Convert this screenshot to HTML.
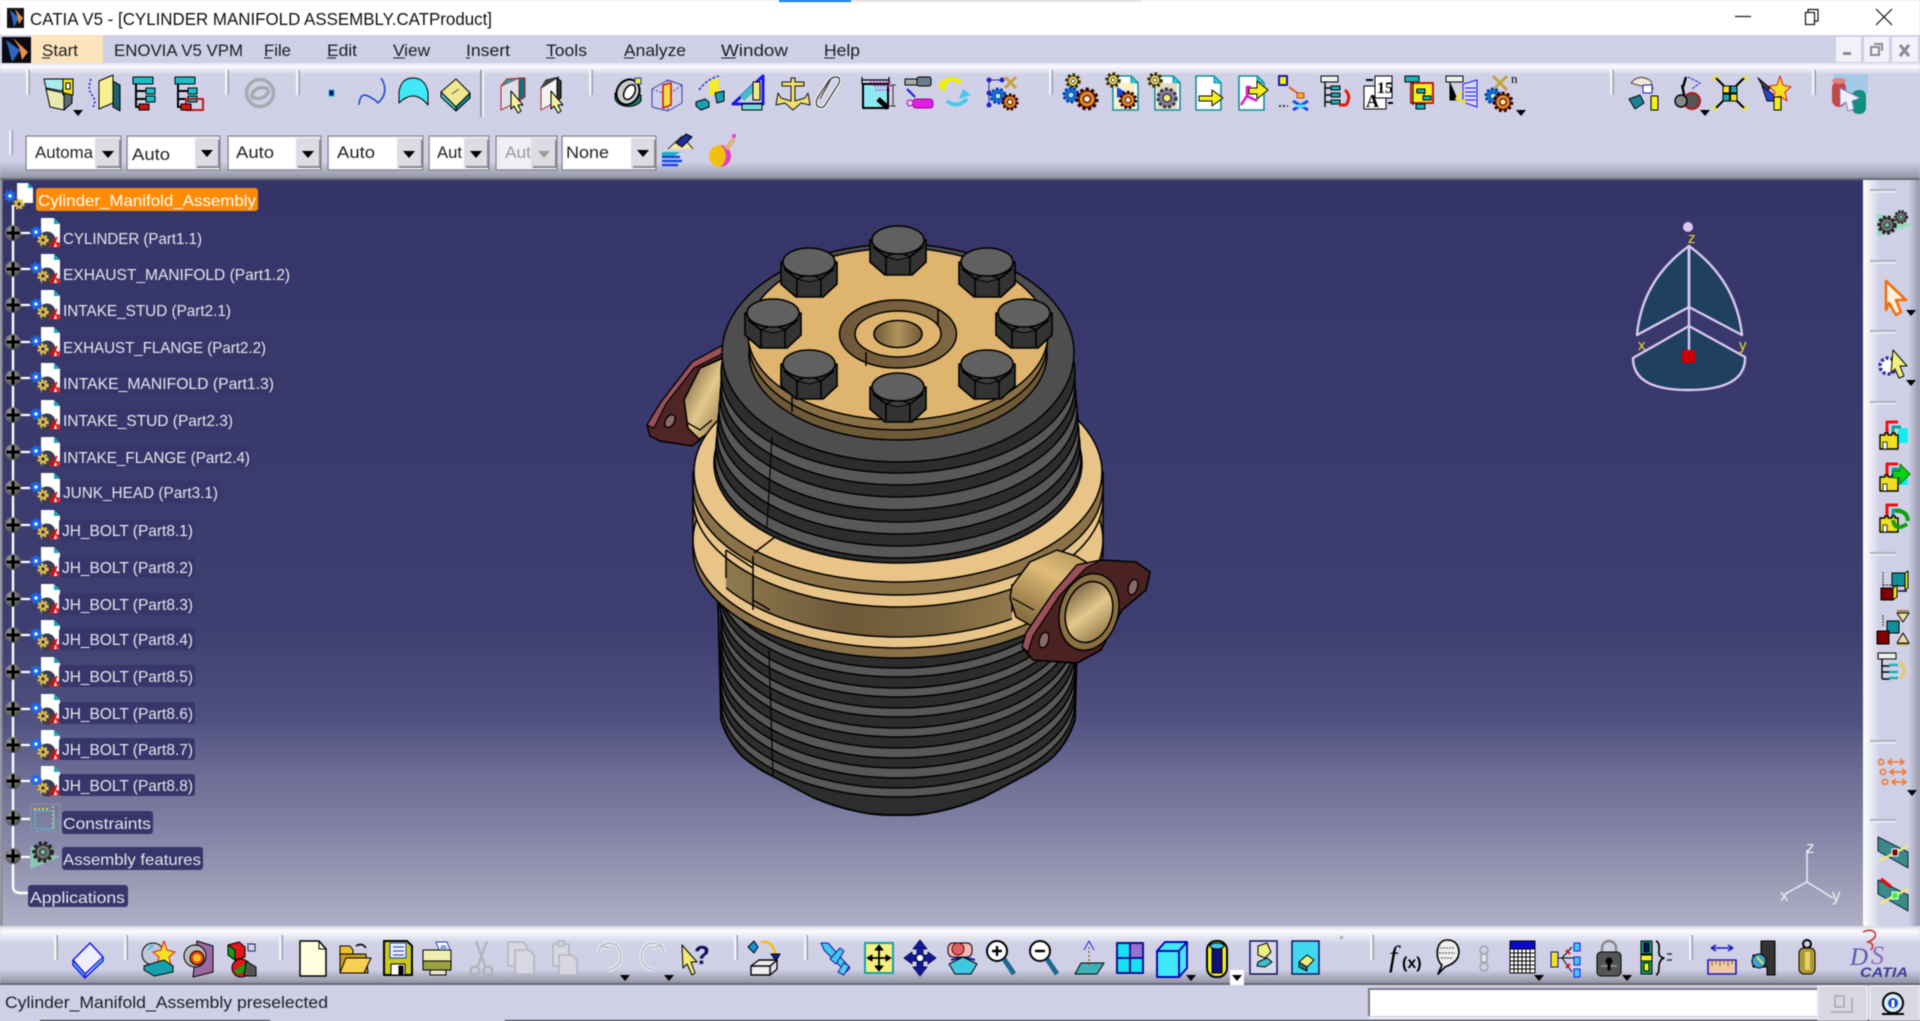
<!DOCTYPE html>
<html><head><meta charset="utf-8"><title>CATIA V5</title>
<style>html,body{margin:0;padding:0;background:#cfd0e6;width:1920px;height:1021px;overflow:hidden}svg{display:block;filter:blur(.4px)}
text{font-family:"Liberation Sans",sans-serif}</style></head><body>
<svg xmlns="http://www.w3.org/2000/svg" width="1920" height="1021" viewBox="0 0 1920 1021">
<defs>
<linearGradient id="vp" x1="0" y1="0" x2="0" y2="1"><stop offset="0" stop-color="#36356a"/><stop offset=".6" stop-color="#3e3e70"/><stop offset=".72" stop-color="#505080"/><stop offset=".8" stop-color="#6e6e96"/><stop offset=".87" stop-color="#8282a6"/><stop offset="1" stop-color="#b0b0c6"/></linearGradient>
<linearGradient id="tbt" x1="0" y1="0" x2="0" y2="1"><stop offset="0" stop-color="#e4e4f0"/><stop offset=".03" stop-color="#fbfbfe"/><stop offset=".1" stop-color="#d0d1e6"/><stop offset=".86" stop-color="#cfd0e6"/><stop offset="1" stop-color="#9494a6"/></linearGradient>
<linearGradient id="tbb" x1="0" y1="0" x2="0" y2="1"><stop offset="0" stop-color="#d8d8e4"/><stop offset=".09" stop-color="#fbfbfe"/><stop offset=".3" stop-color="#d0d1e6"/><stop offset=".75" stop-color="#cfd0e6"/><stop offset="1" stop-color="#8e8e9e"/></linearGradient>
<linearGradient id="tbr" x1="0" y1="0" x2="1" y2="0"><stop offset="0" stop-color="#fff"/><stop offset=".08" stop-color="#f4f4fa"/><stop offset=".3" stop-color="#cfd0e6"/><stop offset=".8" stop-color="#cfd0e6"/><stop offset="1" stop-color="#9494a8"/></linearGradient>
<linearGradient id="grv" gradientUnits="userSpaceOnUse" x1="726" y1="0" x2="1012" y2="0"><stop offset="0" stop-color="#8f7a4f"/><stop offset=".4" stop-color="#70593a"/><stop offset=".75" stop-color="#7a6540"/><stop offset="1" stop-color="#93794c"/></linearGradient>
<linearGradient id="gold" x1=".7" y1="0" x2=".2" y2="1"><stop offset="0" stop-color="#b89a5e"/><stop offset=".3" stop-color="#e0bc78"/><stop offset=".8" stop-color="#8a7040"/></linearGradient>
<linearGradient id="gold2" x1="0" y1="0" x2="1" y2="1"><stop offset="0" stop-color="#5d4a2a"/><stop offset=".5" stop-color="#e4c88c"/><stop offset="1" stop-color="#7c6538"/></linearGradient>
<linearGradient id="hole" x1="0" y1="0" x2="1" y2="0"><stop offset="0" stop-color="#6e5a36"/><stop offset=".5" stop-color="#b1935c"/><stop offset="1" stop-color="#6e5a36"/></linearGradient>
<radialGradient id="pl" cx=".4" cy=".35" r=".7"><stop offset="0" stop-color="#a0a0a0"/><stop offset="1" stop-color="#4a4a4a"/></radialGradient>
<clipPath id="gc"><rect x="726" y="400" width="286" height="300"/></clipPath>
<clipPath id="lowc"><path d="M600 400H1200V600H1078L1075 720Q1068 742 1053 757Q1040 768 1022 777L984 797Q961 807 936 812Q916 816 898 815Q880 816 860 812Q835 807 812 797L774 777Q756 768 743 757Q728 742 721 720L718 600H600z"/></clipPath>

<g id="bolt" stroke="#000" stroke-width="1.6" stroke-linejoin="round">
<path d="M-28 0V22L-13 35H14L28 22V0z" fill="#333"/>
<path d="M-25 7L-12 17L0 12L12 17L25 7M-12 17V34M12 17V34" fill="none"/>
<path d="M-12 17L0 12L12 17L0 20z" fill="#3e3e3e" stroke-width="1"/>
<ellipse rx="26" ry="14" fill="#606060"/>
</g>

<g id="plus"><circle r="8" fill="url(#pl)"/><path d="M-6.5 0H6.5M0-6.5V6.5" stroke="#000" stroke-width="3" fill="none"/></g>
<g id="pt"><path d="M-9-15H4l6 6V14H-9z" fill="#fff"/><path d="M4-15l6 6H4z" fill="#19a8b8"/><circle cx="-3" cy="7" r="8.5" fill="#3a3a50"/>
<circle cx="-14" cy="-1" r="4" fill="#1b6cf0" stroke="#1b6cf0" stroke-width="3.4" stroke-dasharray="2 1.4"/><circle cx="-14" cy="-1" r="1.6" fill="#fff"/>
<circle cx="-7" cy="7" r="4" fill="#d8b84a" stroke="#e2c04a" stroke-width="3.4" stroke-dasharray="2 1.4"/><circle cx="-7" cy="7" r="1.6" fill="#2a2a40"/>
<path d="M3 13L7 4M2 6L10 13" stroke="#e01010" stroke-width="1.6" fill="none"/><circle cx="2" cy="12" r="2" fill="none" stroke="#e01010" stroke-width="1.4"/><circle cx="9" cy="12" r="2" fill="none" stroke="#e01010" stroke-width="1.4"/></g>

<path id="dd" d="M-5 0H5L0 6z" fill="#000"/>
<g id="sv"><rect x="-1" y="0" width="3" height="25" fill="#f4f4f8"/><rect x="1.5" y="0" width="1.4" height="25" fill="#9a9aa8"/></g>
<g id="sh"><rect x="0" y="-1" width="26" height="2.4" fill="#b0b0bc"/><rect x="0" y="1" width="26" height="1.4" fill="#f4f4f8"/></g>

<g id="gy"><circle r="6" fill="#f0e080" stroke="#3a3000" stroke-width="3.6" stroke-dasharray="2.6 2"/><circle r="5" fill="#f0d860" stroke="#000" stroke-width=".8"/><circle r="2" fill="#fff" stroke="#000" stroke-width=".7"/></g>
<g id="go"><circle r="9.5" fill="#c03010" stroke="#200" stroke-width="4" stroke-dasharray="3 2.4"/><circle r="8" fill="#d09030" stroke="#500" stroke-width="1"/><circle r="3.6" fill="#f8f0c0" stroke="#700" stroke-width="1.4"/></g>
<g id="gb"><circle r="7" fill="#1878e0" stroke="#0838a0" stroke-width="3" stroke-dasharray="2.4 2"/><circle r="3" fill="#a0e8ff" stroke="#003" stroke-width=".8"/></g>
<g id="gs"><circle r="9" fill="#666" stroke="#222" stroke-width="3.6" stroke-dasharray="3 2.4"/><circle r="7" fill="#777" stroke="#222" stroke-width="1"/><circle r="3" fill="#6dc0b0" stroke="#222" stroke-width="1"/></g>

<g id="pg"><path d="M-12-17H6l7 7V17H-12z" fill="#fff" stroke="#108e9e" stroke-width="1.6"/><path d="M6-17l7 7H6z" fill="#2ad0e0" stroke="#108e9e"/></g>
<g id="tree"><rect x="-13" y="-16" width="20" height="7" fill="#18c0c8" stroke="#000"/><path d="M-10-9V14H2M-10-2H0M-10 6H0" fill="none" stroke="#000" stroke-width="2"/><rect x="0" y="-5" width="9" height="6" fill="#18c0c8" stroke="#000"/><rect x="0" y="3" width="9" height="6" fill="#18c0c8" stroke="#000"/></g>
<g id="base3"><path d="M-13 0h5v-2h3v2h4v-2h3v2h3V14H-13z" fill="#f0e020" stroke="#000" stroke-width="1.4"/><rect x="-10" y="7" width="4" height="7" fill="#fff" stroke="#000" stroke-width=".8"/></g>
<g id="tp"><path d="M-6 2V-13H5" fill="none" stroke="#f01010" stroke-width="3"/><path d="M0 3V-8H8" fill="none" stroke="#10a0a0" stroke-width="3"/></g>
</defs>

<!-- base regions -->
<rect width="1920" height="35" fill="#fff"/>
<rect x="779" y="0" width="72" height="2" fill="#0078d7"/><rect x="851" y="0" width="290" height="2" fill="#e6e6e6"/>
<rect y="35" width="1920" height="28" fill="#cfd0e6"/>
<rect y="63" width="1920" height="115" fill="url(#tbt)"/>
<rect y="178" width="1920" height="2" fill="#6a6a72"/>
<rect x="0" y="180" width="1864" height="746" fill="url(#vp)"/>
<rect x="0" y="180" width="2.5" height="746" fill="#8c8c96"/>
<rect x="1863" y="180" width="57" height="748" fill="url(#tbr)"/>
<rect y="926" width="1920" height="58" fill="url(#tbb)"/>
<rect y="983" width="1920" height="2" fill="#6a6a72"/>
<rect y="985" width="1920" height="36" fill="#cfd0e6"/>
<rect x="40" y="1020" width="230" height="1" fill="#222"/><rect x="505" y="1020" width="1415" height="1" fill="#222"/>

<!-- title bar -->
<g><rect x="7" y="8" width="17" height="20" fill="#101018"/><path d="M10 10L19 18L14 27L12 18z" fill="#2c68c0"/><path d="M15 9L23 18L19 24L17 15z" fill="#e89040"/></g>
<text x="30" y="25" font-size="17.5" fill="#111" textLength="462" lengthAdjust="spacingAndGlyphs">CATIA V5 - [CYLINDER MANIFOLD ASSEMBLY.CATProduct]</text>
<path d="M1735 16.5H1751" stroke="#111" stroke-width="1.2"/>
<g fill="none" stroke="#111" stroke-width="1.2"><rect x="1805.5" y="12.5" width="9" height="12"/><path d="M1808 12.5V9.5H1818V21H1815"/></g>
<path d="M1876 9L1892 25M1892 9L1876 25" stroke="#111" stroke-width="1.2"/>

<!-- menu bar -->
<rect x="2" y="37" width="29" height="26" fill="#0a0a12"/><path d="M6 40L20 50L12 62L9 50z" fill="#2c68c0"/><path d="M13 38L28 52L22 60L19 47z" fill="#e89040"/>
<rect x="31" y="35" width="72" height="28" fill="#fde4bd"/>
<g font-size="16.5" fill="#1c1c22">
<text x="42" y="56" textLength="36" lengthAdjust="spacingAndGlyphs">Start</text>
<text x="114" y="56" textLength="129" lengthAdjust="spacingAndGlyphs">ENOVIA V5 VPM</text>
<text x="264" y="56" textLength="27" lengthAdjust="spacingAndGlyphs">File</text>
<text x="327" y="56" textLength="30" lengthAdjust="spacingAndGlyphs">Edit</text>
<text x="393" y="56" textLength="37" lengthAdjust="spacingAndGlyphs">View</text>
<text x="466" y="56" textLength="44" lengthAdjust="spacingAndGlyphs">Insert</text>
<text x="546" y="56" textLength="41" lengthAdjust="spacingAndGlyphs">Tools</text>
<text x="624" y="56" textLength="62" lengthAdjust="spacingAndGlyphs">Analyze</text>
<text x="721" y="56" textLength="67" lengthAdjust="spacingAndGlyphs">Window</text>
<text x="824" y="56" textLength="36" lengthAdjust="spacingAndGlyphs">Help</text>
</g>
<g stroke="#1c1c22" stroke-width="1"><path d="M42 58H50M264 58H272M327 58H336M393 58H405M466 58H470M546 58H555M624 58H634M721 58H736M824 58H835"/></g>
<g fill="#f2f2f8"><rect x="1836" y="37" width="25" height="25"/><rect x="1864" y="37" width="25" height="25"/><rect x="1892" y="37" width="26" height="25"/></g>
<rect x="1843" y="52" width="8" height="3" fill="#8a8a96"/>
<g fill="none" stroke="#8a8a96" stroke-width="2"><rect x="1871" y="47" width="8" height="8"/><path d="M1874 44H1882V51"/></g>
<path d="M1900 45L1909 56M1909 45L1900 56" stroke="#8a8a96" stroke-width="3"/>

<!-- toolbar separators -->
<use href="#sv" x="27" y="70"/><use href="#sv" x="226" y="70"/><use href="#sv" x="297" y="70"/>
<g><rect x="480" y="70" width="2" height="47" fill="#9a9aa8"/><rect x="482" y="70" width="2" height="47" fill="#f4f4f8"/></g>
<use href="#sv" x="590" y="70"/><use href="#sv" x="1050" y="70"/><use href="#sv" x="1611" y="70"/><use href="#sv" x="1813" y="70"/><use href="#sv" x="10" y="130"/>

<!-- top row icons -->
<g stroke="#000" stroke-width="1" stroke-linejoin="round">
<g transform="translate(59,93)"><path d="M-13-4L5 0V17L-9 14z" fill="#e8e8b0"/><path d="M-15-14H7L3-2L-13-5z" fill="#a8ecf0"/><rect x="4" y="-14" width="10" height="16" fill="#e8e020"/><rect x="7" y="-10" width="4" height="6" fill="#fff"/><path d="M5 0V17L13 10V2z" fill="#5a6a70"/></g>
<use href="#dd" x="78" y="110" stroke="none"/>
<g transform="translate(105,93)"><path d="M-14-14Q-18-4-13 2T-12 14" fill="none" stroke="#4040c0" stroke-dasharray="2 2" stroke-width="2"/><path d="M-6-12L8-18V10L-6 16z" fill="#f5f090"/><path d="M8-12L15-8V18L8 14z" fill="#206070"/></g>
<g transform="translate(146,93)"><use href="#tree"/><rect x="-7" y="11" width="10" height="6" fill="#c01818"/></g>
<g transform="translate(188,93)"><use href="#tree"/><rect x="-2" y="6" width="17" height="11" fill="none" stroke="#c01818" stroke-width="2"/><rect x="-7" y="11" width="10" height="6" fill="#d01818"/></g>
<g transform="translate(260,93)" fill="none" stroke="#a8a8b0"><circle r="13.5" stroke-width="3.5"/><path d="M-9 4Q-5-9 9-4M9-3Q5 9-9 4" stroke-width="3.5"/></g>
<g transform="translate(331,93)"><rect x="-2" y="-3" width="5" height="6" fill="#101060" stroke="#18c0d8"/></g>
<path d="M359 105Q360 92 368 96T378 103Q390 92 381 78" fill="none" stroke="#1a50c8" stroke-width="1.6"/>
<path d="M399 103V92Q401 78 413 78T428 92V105Q414 88 399 103z" fill="#40e8f8"/>
<g transform="translate(456,93)"><path d="M-15-1L0-14L14 0L0 14z" fill="#f0e890"/><path d="M14 0V5L0 18V14z" fill="#188898"/><path d="M-15-1V4L0 18V14z" fill="#50c0c8"/><path d="M-4 1L3-4" stroke="#555"/></g>
<g transform="translate(513,93)"><path d="M-12-7L6-15V8L-12 17z" fill="#e0e0e8" stroke="#b02020"/><path d="M-12-7L-6-14L12-15L6-15" fill="#30a0a8" stroke="#b02020"/><path d="M6-15L12-15V4L6 8z" fill="#107080" stroke="#b02020"/><path d="M-2-2L10 12H5L8 18L5 20L1 13L-2 16z" fill="#f5f0a0"/></g>
<g transform="translate(551,93)"><path d="M-10-5L6-15V8L-10 17z" fill="#f4f4f4" stroke="#b02020"/><path d="M-10-5L-5-13L8-16L6-15z" fill="#444" stroke="#333"/><path d="M6-15L10-12V5L6 8z" fill="#333"/><path d="M0-2L12 12H7L10 18L7 20L3 13L0 16z" fill="#f5f0a0"/></g>
<g transform="translate(629,93)"><path d="M-14 6A14 10 0 0 0 12 8V2L-14 0z" fill="#188070"/><ellipse cx="-1" cy="-1" rx="11" ry="13" transform="rotate(30 -1 -1)" fill="#ccc" stroke-width="2"/><ellipse cx="0" cy="-1" rx="5" ry="8" transform="rotate(30)" fill="#fff" stroke-width="1.5"/><rect x="6" y="-15" width="6" height="6" fill="#f0f020" stroke="#2030c0"/></g>
<g transform="translate(668,93)" fill="none" stroke="#3838b0"><path d="M-16-4L0-13L14-8V10L0 18L-16 14z"/><path d="M0-13V18M-16-4L0 2L14-8" stroke-dasharray="2 2"/><path d="M-5-8L3-10V12L-5 15z" fill="#f0e040" stroke="#d01818" stroke-width="1.6"/></g>
<g transform="translate(711,93)"><path d="M-2-12L8-15V0L-2 3z" fill="#f5ec30" stroke="none"/><path d="M-12-3Q-4-14 8-17" stroke="#2040e0" fill="none" stroke-dasharray="3 1.5" stroke-width="1.6"/><path d="M4 0L13-2V8L6 10z" fill="#18a0b0"/><path d="M-15 9L-6 6L-2 9V14L-10 17L-15 13z" fill="#18a0b0"/></g>
<g transform="translate(750,93)"><path d="M-17 11L13-17V11z" fill="none" stroke="#1818f0" stroke-width="3"/><path d="M-10 3L2-8L6-3L-6 8z" fill="#40c0c0" stroke="none"/><rect x="3" y="-11" width="7" height="18" fill="#f0e888"/><rect x="-8" y="11" width="20" height="6" fill="#78d8d8"/></g>
<g transform="translate(793,93)" fill="#f0e070" stroke="#111"><path d="M-2-15H2V-11H11V-7H2V8L12 5L15 0L17 12L8 10L0 17L-8 10L-17 12L-15 0L-12 5L-2 8V-7H-11V-11H-2z"/></g>
<g transform="translate(826,93)" fill="none"><path d="M4-14L-8 4Q-12 12-7 14T1 9L13-10Q15-16 10-16T4-12L-6 6" stroke="#fff" stroke-width="3.4"/><path d="M4-14L-8 4Q-12 12-7 14T1 9L13-10Q15-16 10-16T4-12L-6 6" stroke="#444" stroke-width="1.4"/></g>
<g transform="translate(876,93)"><rect x="-13" y="-9" width="25" height="24" fill="#90e8f4" stroke-width="2"/><path d="M-14-13H13M-14-16V-9M13-16V-9" stroke-width="1.2" stroke="#000"/><path d="M-6-11H15M-2-7H16M0-3H14" stroke="#e020c0" stroke-dasharray="1.6 1.6" stroke-width="1.6"/><path d="M2 6L12 15" stroke-width="5"/><path d="M17-8V13M14-8H20M14 13H20" stroke="#333"/></g>
<g transform="translate(919,93)"><rect x="-14" y="-14" width="12" height="6" fill="#aaa"/><rect x="-2" y="-16" width="14" height="9" rx="2" fill="#6a8088"/><path d="M-12-4L-4 4" stroke="#1818f0" stroke-width="2"/><rect x="-6" y="6" width="20" height="9" rx="3" fill="#e020e0" stroke="#a000a0"/><circle cx="-9" cy="10" r="3" fill="none" stroke="#c000c0"/></g>
<g transform="translate(955,93)"><path d="M-14-9Q-4-18 6-10" fill="none" stroke="#f0f000" stroke-width="4"/><path d="M-18-8L-7-11L-11-1z" fill="#f0f000" stroke="none"/><path d="M12 6Q2 16-8 8" fill="none" stroke="#48c8f0" stroke-width="4"/><path d="M16 2L4 6L8-4z" fill="#48c8f0" stroke="none"/></g>
<g transform="translate(1003,93)"><g fill="#2222c8" stroke="none"><circle cx="-14" cy="-13" r="2.5"/><circle cx="-1" cy="-13" r="2.5"/><circle cx="-14" cy="0" r="2.5"/><circle cx="-14" cy="12" r="2.5"/><path d="M-14-13H-1M-14-13V12" stroke="#2222c8"/></g><path d="M2-16L13-5M13-16L2-5" stroke="#c8a040" stroke-width="3"/><use href="#gb" x="-5" y="3" stroke="none"/><use href="#go" transform="translate(7,9) scale(.75)"/></g>

<g transform="translate(1082,93)"><use href="#gy" x="-9" y="-12"/><use href="#gb" x="-11" y="2"/><use href="#go" x="5" y="6"/></g>
<g transform="translate(1125,93)"><use href="#pg"/><rect x="-10" y="-10" width="20" height="26" fill="#f5f0c8" stroke="none"/><use href="#gy" x="-12" y="-13"/><path d="M-8-6L2 0L-8 5z" fill="#1848e0" stroke="none"/><use href="#go" transform="translate(3,7) scale(.8)"/></g>
<g transform="translate(1167,93)"><use href="#pg"/><rect x="-10" y="-10" width="20" height="26" fill="#e0dcc0" stroke="none"/><use href="#gy" x="-12" y="-13"/><circle cx="0" cy="5" r="9" fill="#8080a0" stroke="#333" stroke-width="3" stroke-dasharray="3 2"/><circle cx="0" cy="5" r="4" fill="#f0e880"/></g>
<g transform="translate(1208,93)"><use href="#pg"/><path d="M-9 3H4V-3L15 5L4 13V8H-9z" fill="#f4ee20"/></g>
<g transform="translate(1251,93)"><use href="#pg"/><path d="M-2-5H6V-12L17-3L6 6V1H-2z" fill="#f4ee20"/><path d="M-10 12L-4 3V-6H0M-4 3L6 8" stroke="#e010c0" stroke-width="2.4" fill="none"/></g>
<g transform="translate(1294,93)"><rect x="-15" y="-17" width="8" height="9" fill="#f0f020" stroke="#1818a0" stroke-width="2"/><path d="M-5-6L6 2" stroke="#d86010" stroke-width="2"/><rect x="3" y="0" width="7" height="5" fill="#f0b040" stroke="#c04010"/><path d="M-1 8L14 17M-1 17L14 8" stroke="#1848f0" stroke-width="3"/><path d="M2 13H11" stroke="#50e0f0" stroke-width="3"/><path d="M-15 13H-6" stroke="#333" stroke-dasharray="2 2" stroke-width="2"/></g>
<g transform="translate(1335,93)"><rect x="-14" y="-17" width="17" height="6" fill="#eee"/><path d="M-10-11V14M-10-5H-2M-10 2H-2M-10 9H-2" stroke="#000" stroke-width="1.4"/><rect x="-4" y="-7" width="9" height="4" fill="#18b0b8"/><rect x="-4" y="0" width="9" height="4" fill="#18b0b8"/><rect x="-4" y="7" width="9" height="4" fill="#18b0b8"/><path d="M10-3Q17 3 11 12L4 12" fill="none" stroke="#e01818" stroke-width="3"/></g>
<g transform="translate(1378,93)"><rect x="-14" y="-7" width="22" height="23" fill="#fff"/><rect x="-3" y="-17" width="17" height="22" fill="#fff"/><text x="-1" y="0" font-size="16" font-weight="bold" stroke="none" fill="#000" style="font-family:'Liberation Serif'">15</text><text x="-12" y="14" font-size="18" font-weight="bold" stroke="none" fill="#000" style="font-family:'Liberation Serif'">A</text><path d="M-12-13H-5M10 10H15" stroke-width="2"/></g>
<g transform="translate(1419,93)"><rect x="-14" y="-17" width="14" height="6" fill="#18b0b8"/><rect x="-8" y="-10" width="22" height="20" fill="#f5f020" stroke="#c01818" stroke-width="2"/><path d="M-6-11V12M-3-2H5V6" fill="none"/><rect x="-2" y="-4" width="8" height="4" fill="#18b0b8"/><rect x="4" y="3" width="8" height="4" fill="#18b0b8"/><rect x="-3" y="11" width="9" height="5" fill="#18b0b8"/></g>
<g transform="translate(1461,93)"><rect x="-15" y="-17" width="17" height="6" fill="#eee"/><path d="M-11-11V7H-3"/><path d="M2-9L16-13V14L2 9z" fill="#d8d8f8" stroke="#1818f0"/><path d="M4-5H15M4-1H15M4 3H15M4 7H15" stroke="#1818f0"/><path d="M-5 7L1-2M-3 7L5 9" stroke="#f0e040" stroke-width="3"/></g>
<g transform="translate(1502,93)"><path d="M-9-17L5-3M5-17L-9-3" stroke="#c8a040" stroke-width="3"/><use href="#gb" x="-9" y="3"/><use href="#go" transform="translate(1,9) scale(.9)"/><text x="9" y="-10" font-size="13" stroke="none" fill="#000" style="font-family:'Liberation Serif'">n</text></g>
<use href="#dd" x="1521" y="110" stroke="none"/>
<g transform="translate(1645,93)"><path d="M-14-10Q-6-20 6-12L8-4L-4-7z" fill="#f0e8d8" stroke="#604040"/><rect x="-2" y="-8" width="9" height="8" fill="#fff" stroke="#1818c0"/><path d="M-16 6L-5 2L-1 10L-10 16z" fill="#208098"/><rect x="6" y="3" width="7" height="14" fill="#f0f020"/></g>
<g transform="translate(1688,93)"><path d="M-6-8L-3 6M-2-16L-5-6" stroke-width="2.4"/><path d="M0-16L12-10L4-4" fill="none" stroke="#2030e0" stroke-dasharray="3 1"/><circle cx="4" cy="8" r="8" fill="#555" stroke="#b01818" stroke-width="2"/><circle cx="-7" cy="8" r="6" fill="#888" stroke-width="1.4"/></g>
<use href="#dd" x="1705" y="110" stroke="none"/>
<g transform="translate(1730,93)"><path d="M-14-15L-6-7M14-15L6-7M-14 15L-6 7M14 15L6 7" stroke-width="2"/><path d="M-16-12V-16H-12M16-12V-16H12M-16 12V16H-12M16 12V16H12" fill="none" stroke="#f0e020" stroke-width="2"/><rect x="-7" y="-7" width="6.5" height="7" fill="#f0e020"/><rect x=".5" y="-7" width="6.5" height="7" fill="#20a0a8"/><rect x="-7" y="1" width="6.5" height="7" fill="#20a0a8"/><rect x=".5" y="1" width="6.5" height="7" fill="#f0e020"/></g>
<g transform="translate(1774,93)"><path d="M-16-15L-4-5L-8-1z" fill="#444"/><path d="M-12-7L0 2V8H-7z" fill="#2848d0"/><path d="M6-17L9-8L17-6L11-1L13 8L6 3L-1 7L1-1L-5-7L3-8z" fill="#f8e020" stroke="#e01818"/><rect x="0" y="4" width="7" height="13" fill="#f0f020"/></g>
<g transform="translate(1848,93)" stroke="none"><rect x="-14" y="-19" width="34" height="20" fill="#a0c8e8" opacity=".9"/><rect x="-16" y="-12" width="14" height="26" rx="7" fill="#c04848"/><ellipse cx="-9" cy="-12" rx="7" ry="3" fill="#e08080"/><rect x="4" y="-3" width="14" height="24" rx="6" fill="#109080"/><path d="M-8-5L12 5L4 8L6 16L0 18L-2 9L-8 13z" fill="#f0f0ff" stroke="#8080c0"/></g>
<!-- brush / ball -->
<g transform="translate(678,152)"><path d="M-10-3L4-16L15-3" fill="#f0e8a0" stroke="#333"/><path d="M-2-9L4-5L14-15L8-18z" fill="#1830a0"/><path d="M-16 0H2L-4 4H-16z" fill="#18b0c0" stroke="none"/><path d="M-16 5H2M-16 9H4M-16 13H0" stroke="#1848e0" stroke-width="2.4"/></g>
<g transform="translate(720,151)" stroke="none"><circle cy="5" r="11" fill="#f0c010"/><path d="M0-6A11 11 0 0 1 11 5A11 11 0 0 1 0 16A10 14 0 0 0 6 5A10 14 0 0 0 0-6z" fill="#e040c0"/><path d="M4-4L13-14L16-10L8-1z" fill="#e0b080"/><circle cx="14" cy="-15" r="2" fill="#e040c0"/></g>
</g>

<!-- combos -->
<g>
<rect x="26" y="136" width="95" height="34" fill="#f2f2f6" stroke="#777" stroke-width="1"/><rect x="28" y="138" width="67" height="30" fill="#fff"/><rect x="95" y="138" width="25" height="30" fill="#dcdce4"/><path d="M97 167H120V140" stroke="#888" stroke-width="2" fill="none"/><path d="M102 151H114L108 158z" fill="#000"/>
<rect x="127" y="136" width="93" height="34" fill="#f2f2f6" stroke="#777"/><rect x="129" y="138" width="66" height="30" fill="#fff"/><rect x="195" y="138" width="24" height="30" fill="#dcdce4"/><path d="M197 167H219V140" stroke="#888" stroke-width="2" fill="none"/><path d="M201 150H213L207 157z" fill="#000"/>
<rect x="228" y="136" width="93" height="34" fill="#f2f2f6" stroke="#777"/><rect x="230" y="138" width="66" height="30" fill="#fff"/><rect x="296" y="138" width="24" height="30" fill="#dcdce4"/><path d="M298 167H320V140" stroke="#888" stroke-width="2" fill="none"/><path d="M302 151H314L308 158z" fill="#000"/>
<rect x="328" y="136" width="95" height="34" fill="#f2f2f6" stroke="#777"/><rect x="330" y="138" width="67" height="30" fill="#fff"/><rect x="397" y="138" width="25" height="30" fill="#dcdce4"/><path d="M399 167H422V140" stroke="#888" stroke-width="2" fill="none"/><path d="M403 151H415L409 158z" fill="#000"/>
<rect x="429" y="136" width="60" height="34" fill="#f2f2f6" stroke="#777"/><rect x="431" y="138" width="33" height="30" fill="#fff"/><rect x="464" y="138" width="24" height="30" fill="#dcdce4"/><path d="M466 167H488V140" stroke="#888" stroke-width="2" fill="none"/><path d="M470 151H482L476 158z" fill="#000"/>
<rect x="496" y="136" width="61" height="34" fill="#e8e8ee" stroke="#777"/><rect x="498" y="138" width="33" height="30" fill="#f0f0f4"/><rect x="531" y="138" width="25" height="30" fill="#dcdce4"/><path d="M533 167H556V140" stroke="#888" stroke-width="2" fill="none"/><path d="M538 151H550L544 158z" fill="#999"/>
<rect x="562" y="136" width="94" height="34" fill="#f2f2f6" stroke="#777"/><rect x="564" y="138" width="67" height="30" fill="#fff"/><rect x="631" y="138" width="24" height="30" fill="#dcdce4"/><path d="M633 167H655V140" stroke="#888" stroke-width="2" fill="none"/><path d="M637 150H649L643 157z" fill="#000"/>
<g font-size="16.5" fill="#222">
<text x="35" y="158" textLength="58" lengthAdjust="spacingAndGlyphs">Automa</text>
<text x="132" y="160" textLength="38" lengthAdjust="spacingAndGlyphs">Auto</text>
<text x="236" y="158" textLength="38" lengthAdjust="spacingAndGlyphs">Auto</text>
<text x="337" y="158" textLength="38" lengthAdjust="spacingAndGlyphs">Auto</text>
<text x="437" y="158" textLength="25" lengthAdjust="spacingAndGlyphs">Aut</text>
<text x="505" y="158" textLength="26" lengthAdjust="spacingAndGlyphs" fill="#989aa0">Aut</text>
<text x="566" y="158" textLength="43" lengthAdjust="spacingAndGlyphs">None</text>
</g></g>

<!-- MODEL -->
<g>
<!-- left pipe + flange -->
<path d="M728 356L700 368L684 398L686 426L698 440L720 425L728 400z" fill="url(#gold2)" stroke="#000" stroke-width="1.5"/>
<path d="M686 422L700 430L712 420" fill="none" stroke="#000" stroke-width="1.3"/>
<path d="M723 345L692 362L661 402L647 425L650 436L660 441L692 446L700 440L688 428L684 400L700 368L722 358z" fill="#4f2525" stroke="#000" stroke-width="1.5"/>
<path d="M723 345L692 362L661 402L647 425L654 428L666 404L694 368L722 354z" fill="#9a5058" stroke="#000" stroke-width="1.2"/>
<ellipse cx="670" cy="421" rx="4.5" ry="7" transform="rotate(30 670 421)" fill="#8a6a6a" stroke="#000" stroke-width="1.4"/>

<!-- lower fins -->
<g stroke="#000" stroke-width="1.5" clip-path="url(#lowc)">
<ellipse cx="898" cy="720" rx="177" ry="95" fill="#2d2d2d"/>
<ellipse cx="898" cy="702" rx="177" ry="95" fill="#585858"/>
<ellipse cx="898" cy="693" rx="177" ry="95" fill="#2d2d2d"/>
<ellipse cx="898" cy="683" rx="177" ry="95" fill="#585858"/>
<ellipse cx="898" cy="673" rx="177" ry="95" fill="#2d2d2d"/>
<ellipse cx="898" cy="663" rx="177" ry="95" fill="#585858"/>
<ellipse cx="898" cy="653" rx="177" ry="95" fill="#2d2d2d"/>
<ellipse cx="898" cy="642" rx="177" ry="95" fill="#585858"/>
<ellipse cx="898" cy="633" rx="177" ry="95" fill="#2d2d2d"/>
<ellipse cx="898" cy="622" rx="177" ry="95" fill="#585858"/>
<ellipse cx="898" cy="613" rx="177" ry="95" fill="#2d2d2d"/>
<ellipse cx="898" cy="602" rx="178" ry="95" fill="#585858"/>
<ellipse cx="898" cy="593" rx="178" ry="95" fill="#2d2d2d"/>
<ellipse cx="898" cy="582" rx="180" ry="95" fill="#585858"/>
<ellipse cx="898" cy="573" rx="180" ry="95" fill="#2d2d2d"/>
</g>
<path d="M718 600L721 720Q728 742 743 757Q756 768 774 777L812 797Q835 807 860 812Q880 816 898 815Q916 816 936 812Q961 807 984 797L1022 777Q1040 768 1053 757Q1068 742 1075 720L1078 600" fill="none" stroke="#000" stroke-width="1.8"/>
<path d="M769 650L773 777" stroke="#000" stroke-width="1.2"/>

<!-- flange -->
<g stroke="#000" stroke-width="1.5">
<path d="M693 472V550A205 108 0 0 0 1103 550V472z" fill="#8a7148"/>
<ellipse cx="898" cy="540" rx="205" ry="108" fill="#e8c488"/>
<ellipse cx="898" cy="529" rx="205" ry="108" fill="url(#grv)" clip-path="url(#gc)"/>
<ellipse cx="898" cy="499" rx="205" ry="108" fill="#e8c488"/>
<ellipse cx="898" cy="487" rx="205" ry="108" fill="#8a7148"/>
<ellipse cx="898" cy="472" rx="204" ry="110" fill="#e8c488"/>
<path d="M726 550V578M753 556V610M726 550L753 568M754 553L775 537M753 600L770 610" fill="none"/>
<path d="M1012 584V612" fill="none"/>
</g>

<!-- upper fins -->
<g stroke="#000" stroke-width="1.5">
<ellipse cx="898" cy="463" rx="184" ry="100" fill="#2d2d2d"/>
<ellipse cx="898" cy="458" rx="183" ry="100" fill="#585858"/>
<ellipse cx="898" cy="446" rx="182" ry="100" fill="#2d2d2d"/>
<ellipse cx="898" cy="434" rx="181" ry="100" fill="#585858"/>
<ellipse cx="898" cy="422" rx="180" ry="100" fill="#2d2d2d"/>
<ellipse cx="898" cy="410" rx="179" ry="100" fill="#585858"/>
<ellipse cx="898" cy="397" rx="178" ry="100" fill="#2d2d2d"/>
<ellipse cx="898" cy="385" rx="177" ry="100" fill="#585858"/>
<ellipse cx="898" cy="373" rx="177" ry="100" fill="#2d2d2d"/>
<ellipse cx="898" cy="353" rx="176" ry="109" fill="#4e4e4e"/>
<path d="M772 437L767 527" fill="none" stroke-width="1.1"/>
</g>

<!-- plate -->
<g stroke="#000" stroke-width="1.5">
<ellipse cx="898" cy="354" rx="149" ry="86" fill="#6e5a38"/>
<ellipse cx="898" cy="344" rx="149" ry="86" fill="#8a7046"/>
<ellipse cx="898" cy="334" rx="150" ry="86" fill="#dfb46e"/>
<path d="M792 397L792 412" fill="none"/>
<ellipse cx="898" cy="334" rx="58.5" ry="34" fill="url(#grv)"/>
<ellipse cx="898" cy="334" rx="43" ry="23" fill="#dfb46e"/>
<ellipse cx="898" cy="334" rx="24" ry="13.5" fill="url(#hole)"/>
<path d="M938 310V326M866 352V366" fill="none"/>
</g>
<use href="#bolt" x="898" y="240"/><use href="#bolt" x="809" y="262"/><use href="#bolt" x="987" y="262"/>
<use href="#bolt" x="773" y="313"/><use href="#bolt" x="1024" y="313"/>
<use href="#bolt" x="809" y="364"/><use href="#bolt" x="987" y="364"/><use href="#bolt" x="898" y="387"/>

<!-- right pipe + flange -->
<path d="M1057 550L1030 562L1012 586L1010 598L1016 617L1035 628L1060 640L1096 568L1076 556z" fill="url(#gold)" stroke="#000" stroke-width="1.5"/>
<path d="M1012 598L1034 610" fill="none" stroke="#000" stroke-width="1.2"/>
<path d="M1150 572L1136 562L1101 560L1077 565L1053 593L1026 633L1022 647L1033 660L1077 663L1101 650L1122 610L1146 590z" fill="#4a2222" stroke="#000" stroke-width="1.6"/>
<path d="M1077 565L1053 593L1026 633L1022 647L1028 652L1033 636L1060 595L1086 568L1101 560z" fill="#9a5058" stroke="#000" stroke-width="1.2"/>
<ellipse cx="1089" cy="612" rx="29" ry="39" transform="rotate(17 1089 612)" fill="#8a7042" stroke="#000" stroke-width="1.5"/>
<ellipse cx="1089" cy="612" rx="23" ry="31" transform="rotate(17 1089 612)" fill="url(#gold2)" stroke="#000" stroke-width="1.5"/>
<ellipse cx="1133" cy="587" rx="4.5" ry="8" transform="rotate(17 1133 587)" fill="#8a6a6a" stroke="#000" stroke-width="1.3"/>
<ellipse cx="1044" cy="640" rx="4.5" ry="8" transform="rotate(17 1044 640)" fill="#8a6a6a" stroke="#000" stroke-width="1.3"/>
</g>

<!-- tree -->
<path d="M13 205V886Q13 893 20 893H30" fill="none" stroke="#fff" stroke-width="2.4"/>
<g stroke="#fff" stroke-width="2.2" fill="none"><path d="M13 233H30M13 269H30M13 305H30M13 342H30M13 378H30M13 415H30M13 452H30M13 488H30M13 525H30M13 562H30M13 599H30M13 635H30M13 672H30M13 709H30M13 745H30M13 781H30M13 819H30M13 857H30"/></g>
<g><use href="#plus" x="13" y="233"/><use href="#plus" x="13" y="269"/><use href="#plus" x="13" y="305"/><use href="#plus" x="13" y="342"/><use href="#plus" x="13" y="378"/><use href="#plus" x="13" y="415"/><use href="#plus" x="13" y="452"/><use href="#plus" x="13" y="488"/><use href="#plus" x="13" y="525"/><use href="#plus" x="13" y="562"/><use href="#plus" x="13" y="599"/><use href="#plus" x="13" y="635"/><use href="#plus" x="13" y="672"/><use href="#plus" x="13" y="709"/><use href="#plus" x="13" y="745"/><use href="#plus" x="13" y="781"/><use href="#plus" x="13" y="818"/><use href="#plus" x="13" y="856"/></g>
<g><use href="#pt" x="50" y="233"/><use href="#pt" x="50" y="269"/><use href="#pt" x="50" y="305"/><use href="#pt" x="50" y="342"/><use href="#pt" x="50" y="378"/><use href="#pt" x="50" y="415"/><use href="#pt" x="50" y="452"/><use href="#pt" x="50" y="488"/><use href="#pt" x="50" y="525"/><use href="#pt" x="50" y="562"/><use href="#pt" x="50" y="599"/><use href="#pt" x="50" y="635"/><use href="#pt" x="50" y="672"/><use href="#pt" x="50" y="709"/><use href="#pt" x="50" y="745"/><use href="#pt" x="50" y="781"/>
<!-- root -->
<path d="M17 183H28l5 5V203H17z" fill="#fff"/><path d="M28 183l5 5h-5z" fill="#19a8b8"/><circle cx="10" cy="196" r="4.4" fill="#1b6cf0" stroke="#1b6cf0" stroke-width="3.4" stroke-dasharray="2 1.4"/><circle cx="10" cy="196" r="1.6" fill="#fff"/><circle cx="19" cy="204" r="4" fill="#d8b84a" stroke="#e2c04a" stroke-width="3.2" stroke-dasharray="2 1.4"/><circle cx="19" cy="204" r="1.6" fill="#2a2a40"/>
<!-- constraints -->
<rect x="31" y="804" width="29" height="28" fill="none" stroke="#999" stroke-dasharray="1.5 1.5" stroke-width="1.5"/><rect x="35" y="811" width="19" height="18" fill="none" stroke="#3cc8e8" stroke-dasharray="2 1.5" stroke-width="1.6"/><path d="M34 809H48" stroke="#e8d040" stroke-dasharray="2 2" stroke-width="2"/><path d="M53 806V829" stroke="#e8d040" stroke-dasharray="2 2" stroke-width="1.5"/>
<!-- assembly features -->
<path d="M31 846L60 857L30 869z" fill="#8cc8b4"/><use href="#gs" transform="translate(43,852)"/>
</g>
<!-- labels -->
<rect x="36" y="188" width="222" height="23" rx="3" fill="#ff8a05"/>
<g fill="#36366a"><rect x="60" y="227" width="145" height="22" rx="3"/><rect x="60" y="263" width="232" height="22" rx="3"/><rect x="60" y="299" width="173" height="22" rx="3"/><rect x="60" y="336" width="208" height="22" rx="3"/><rect x="60" y="372" width="216" height="22" rx="3"/><rect x="60" y="409" width="175" height="22" rx="3"/><rect x="60" y="446" width="192" height="22" rx="3"/><rect x="60" y="481" width="160" height="22" rx="3"/>
<rect x="59" y="519" width="136" height="22" rx="3"/><rect x="59" y="556" width="136" height="22" rx="3"/><rect x="59" y="593" width="136" height="22" rx="3"/><rect x="59" y="628" width="136" height="22" rx="3"/><rect x="59" y="665" width="136" height="22" rx="3"/><rect x="59" y="702" width="136" height="22" rx="3"/><rect x="59" y="738" width="136" height="22" rx="3"/><rect x="59" y="774" width="136" height="22" rx="3"/>
<rect x="62" y="811" width="91" height="23" rx="3"/><rect x="62" y="847" width="141" height="23" rx="3"/><rect x="28" y="885" width="100" height="22" rx="3"/></g>
<g font-size="16" fill="#e6e6ee">
<text x="38" y="206" textLength="218" lengthAdjust="spacingAndGlyphs" fill="#fff">Cylinder_Manifold_Assembly</text>
<text x="63" y="244" textLength="139" lengthAdjust="spacingAndGlyphs">CYLINDER (Part1.1)</text>
<text x="63" y="280" textLength="227" lengthAdjust="spacingAndGlyphs">EXHAUST_MANIFOLD (Part1.2)</text>
<text x="63" y="316" textLength="168" lengthAdjust="spacingAndGlyphs">INTAKE_STUD (Part2.1)</text>
<text x="63" y="353" textLength="203" lengthAdjust="spacingAndGlyphs">EXHAUST_FLANGE (Part2.2)</text>
<text x="63" y="389" textLength="211" lengthAdjust="spacingAndGlyphs">INTAKE_MANIFOLD (Part1.3)</text>
<text x="63" y="426" textLength="170" lengthAdjust="spacingAndGlyphs">INTAKE_STUD (Part2.3)</text>
<text x="63" y="463" textLength="187" lengthAdjust="spacingAndGlyphs">INTAKE_FLANGE (Part2.4)</text>
<text x="63" y="498" textLength="155" lengthAdjust="spacingAndGlyphs">JUNK_HEAD (Part3.1)</text>
<text x="62" y="536" textLength="131" lengthAdjust="spacingAndGlyphs">JH_BOLT (Part8.1)</text>
<text x="62" y="573" textLength="131" lengthAdjust="spacingAndGlyphs">JH_BOLT (Part8.2)</text>
<text x="62" y="610" textLength="131" lengthAdjust="spacingAndGlyphs">JH_BOLT (Part8.3)</text>
<text x="62" y="645" textLength="131" lengthAdjust="spacingAndGlyphs">JH_BOLT (Part8.4)</text>
<text x="62" y="682" textLength="131" lengthAdjust="spacingAndGlyphs">JH_BOLT (Part8.5)</text>
<text x="62" y="719" textLength="131" lengthAdjust="spacingAndGlyphs">JH_BOLT (Part8.6)</text>
<text x="62" y="755" textLength="131" lengthAdjust="spacingAndGlyphs">JH_BOLT (Part8.7)</text>
<text x="62" y="791" textLength="131" lengthAdjust="spacingAndGlyphs">JH_BOLT (Part8.8)</text>
<text x="63" y="829" textLength="88" lengthAdjust="spacingAndGlyphs">Constraints</text>
<text x="63" y="865" textLength="138" lengthAdjust="spacingAndGlyphs">Assembly features</text>
<text x="30" y="903" textLength="95" lengthAdjust="spacingAndGlyphs">Applications</text>
</g>

<!-- compass -->
<g stroke="#dcc8f0" stroke-width="2.4" stroke-linejoin="round" fill="#1f4060">
<path d="M1689 246Q1642 280 1637 335L1689 307z"/>
<path d="M1689 246Q1736 280 1742 335L1689 307z"/>
<path d="M1689 326L1633 358Q1633 390 1688 390Q1746 390 1745 357z"/>
<path d="M1689 245V352" fill="none"/>
<circle cx="1688" cy="227" r="5" fill="#dcc8f0" stroke="none"/>
</g>
<rect x="1682" y="350" width="13" height="13" fill="#cc0000"/>
<g fill="#f0e020" font-size="15"><text x="1688" y="243">z</text><text x="1638" y="350">x</text><text x="1739" y="350">y</text></g>

<!-- axis -->
<path d="M1807 850V882L1785 894M1807 882L1833 898" fill="none" stroke="#f0f0f4" stroke-width="1.4"/>
<g fill="#f0f0f4" font-size="17"><text x="1806" y="853">z</text><text x="1780" y="901">x</text><text x="1832" y="901">y</text></g>

<!-- right toolbar -->
<use href="#sh" x="1870" y="190"/><use href="#sh" x="1870" y="261"/><use href="#sh" x="1870" y="331"/><use href="#sh" x="1870" y="402"/><use href="#sh" x="1870" y="553"/><use href="#sh" x="1870" y="741"/><use href="#sh" x="1870" y="820"/>
<g stroke="#000" stroke-width="1" stroke-linejoin="round">
<g transform="translate(1895,223)"><path d="M-18-10L18 2L-18 14z" fill="#9cd8c4" stroke="none"/><use href="#gs" transform="translate(-8,2) scale(.9)"/><use href="#gs" transform="translate(6,-6) scale(.65)"/></g>
<path d="M1886 281L1906 300H1896L1901 312L1896 315L1889 303L1886 310z" fill="#fff0e0" stroke="#f07010" stroke-width="2.6"/>
<use href="#dd" x="1911" y="310" stroke="none"/>
<g transform="translate(1895,363)"><circle cx="-7" cy="3" r="8" fill="#fff" stroke="#3030a0" stroke-width="3.5" stroke-dasharray="3 2"/><path d="M-2-13L12 3H5L9 13L4 15L0 6L-4 10z" fill="#f0f080"/></g>
<use href="#dd" x="1911" y="380" stroke="none"/>
<g transform="translate(1893,435)"><rect x="5" y="-7" width="10" height="15" fill="#10f0f0" stroke="none"/><use href="#tp"/><use href="#base3"/></g>
<g transform="translate(1893,477)"><rect x="5" y="-7" width="10" height="15" fill="#10f0f0" stroke="none"/><use href="#tp"/><use href="#base3"/><path d="M0-6H7V-13L17-3L7 7V1H0z" fill="#10d010" stroke="#107010"/></g>
<g transform="translate(1893,518)"><use href="#tp"/><use href="#base3"/><path d="M2-7Q14-8 15 3M14 6Q2 14 0 2" fill="none" stroke="#10a010" stroke-width="4"/></g>
<g transform="translate(1893,585)"><path d="M-10-13V8M-10 0H14" stroke="#222" stroke-dasharray="2 1"/><rect x="-1" y="-12" width="13" height="13" fill="#109098"/><path d="M12-12L15-14V3L12 5V1z" fill="#f0e020"/><rect x="-12" y="3" width="12" height="12" fill="#800000"/><path d="M0 3L4 0V12L0 15z" fill="#f0e020"/><path d="M5 6H14" stroke="#101060" stroke-width="1.6"/></g>
<g transform="translate(1893,628)"><path d="M-10-13V-1" stroke="#222" stroke-dasharray="2 1"/><rect x="-6" y="-7" width="12" height="12" fill="#109098"/><rect x="-16" y="3" width="12" height="13" fill="#800000"/><path d="M4-15H16L10-6z" fill="#f0dca0"/><path d="M4-17H16M4 16H16" stroke="#a08040" stroke-width="2"/><path d="M4 15H16L10 5z" fill="#f0dca0"/></g>
<g transform="translate(1893,668)"><rect x="-15" y="-15" width="18" height="6" fill="#eee"/><path d="M-11-9V11M-11-2H-3M-11 4H-3M-11 11H-3" stroke-width="1.4"/><path d="M-4-3H5M-4 4H5M-4 10H5" stroke="#18b0b8" stroke-width="2.4"/><path d="M6-6Q16 1 7 11" fill="none" stroke="#e8c860" stroke-width="3"/></g>
<g fill="none" stroke="#f07830" stroke-width="1.6"><circle cx="1881" cy="762" r="2.6"/><path d="M1888 762H1904M1892 759L1888 762L1892 765M1900 759L1904 762L1900 765"/><circle cx="1883" cy="772" r="2.6"/><path d="M1890 772H1906M1894 769L1890 772L1894 775M1902 769L1906 772L1902 775"/><circle cx="1885" cy="782" r="2.6"/><path d="M1892 782H1906M1896 779L1892 782L1896 785M1902 779L1906 782L1902 785"/></g>
<use href="#dd" x="1912" y="790" stroke="none"/>
<g transform="translate(1893,852)"><path d="M-15-15L15 0V16L-15-1z" fill="#3a8a88" stroke="#102040"/><path d="M-14 9L15-6" stroke="#f0e870" stroke-width="2.4"/><rect x="-1" y="-3" width="6" height="7" fill="#800000" stroke="#fff"/></g>
<g transform="translate(1893,895)"><path d="M-15-15L15 0V16L-15-1z" fill="#3a8a88" stroke="#102040"/><path d="M-14 9L15-6" stroke="#f0e870" stroke-width="2.4"/><rect x="-1" y="-3" width="6" height="7" fill="#40f040" stroke="#fff"/><path d="M-12-16L-2-8" stroke="#e01010" stroke-width="3.5"/></g>
</g>

<!-- bottom toolbar seps -->
<use href="#sv" x="55" y="935"/><use href="#sv" x="125" y="935"/><use href="#sv" x="280" y="935"/><use href="#sv" x="735" y="935"/><use href="#sv" x="805" y="935"/><use href="#sv" x="1371" y="935"/><use href="#sv" x="1690" y="935"/>
<rect x="1340" y="936" width="3" height="3" fill="#aaa"/>

<g stroke="#000" stroke-width="1" stroke-linejoin="round">
<g transform="translate(88,958)"><path d="M-15 2L2-15L15-1L-3 16z" fill="#eef" stroke="#1818f0" stroke-width="1.5"/><path d="M-15 2V7L-3 20V16zM-3 20L15 3V-1" fill="#68c8d0" stroke="#1818f0" stroke-width="1.5"/></g>
<g transform="translate(158,958)"><circle cx="-5" cy="-4" r="11" fill="#c0c8d8"/><path d="M-10-8L-5-13" stroke="#40c0f0" stroke-width="2"/><path d="M6-17L9-8L17-6L11-1L13 7L6 3L-1 7L1-1L-5-6L3-8z" fill="#f8e020" stroke="#e01818"/><path d="M-14 8L6 2L15 8V14L-4 18L-14 12z" fill="#18a0b0"/></g>
<g transform="translate(199,958)"><path d="M-2-17L14-12V14L-6 19z" fill="#9a6aa0"/><circle cx="-4" cy="-2" r="11" fill="#bbb"/><circle cx="-2" cy="0" r="7" fill="#e84010"/><circle cx="-2" cy="0" r="4" fill="#f8c020" stroke="none"/></g>
<g transform="translate(242,958)"><path d="M-14-13L-3-16L3-11V-1L-7 2L-14-3z" fill="#e01818"/><path d="M-14-13L-7-8V2L-14-3z" fill="#10a010"/><path d="M5-14H13V-6M12-7H6V-13" fill="none" stroke="#202060"/><ellipse cx="-1" cy="10" rx="9" ry="9" fill="#e01818"/><path d="M-8 13Q0 8 6 2L8 8Q2 16-5 16z" fill="#10a010" stroke="none"/><path d="M4 3L14 9V18H2z" fill="#555"/></g>
<g transform="translate(312,958)"><path d="M-12-17H7L14-9V18H-12z" fill="#ffffe0" stroke-width="1.5"/><path d="M7-17V-9H14" fill="none"/></g>
<g transform="translate(354,958)"><path d="M-14-4V-12H-4L-1-8V-4z" fill="#f0c030"/><path d="M-14 15V-4H12L14 15z" fill="#c89820"/><path d="M-14 15L-8 0H17L10 15z" fill="#f8d050"/><path d="M2-12Q8-16 12-10" stroke-width="1.5" fill="none"/></g>
<g transform="translate(398,958)"><path d="M-14-17H9L14-12V17H-14z" fill="#c8c820" stroke-width="2"/><rect x="-8" y="-15" width="16" height="15" fill="#eef" stroke="#1040c0"/><path d="M-5-11H6M-5-7H6M-5-3H6" stroke="#1040c0"/><rect x="-7" y="6" width="14" height="11" fill="#fff"/><rect x="1" y="8" width="4" height="8" fill="#000"/></g>
<g transform="translate(438,958)"><path d="M-2-16H9L12-8H1z" fill="#fff" stroke="#1040c0"/><path d="M-15-8H13V3H-15z" fill="#eeeeb0"/><path d="M-15 3H13V12H-15z" fill="#9aa040"/><path d="M-8 12H8V17H-8z" fill="#e8e8d0"/><path d="M3-12H8M2-10H9" stroke="#1040c0"/></g>
<g transform="translate(481,958)" fill="none" stroke="#b0b0b8" stroke-width="2.2"><path d="M-5-17L4 8M6-17L-3 8"/><circle cx="-6" cy="13" r="4.5"/><circle cx="7" cy="13" r="4.5"/></g>
<g transform="translate(520,958)" fill="#d8d8e4" stroke="#b4b4bc" stroke-width="1.6"><path d="M-12-16H3L7-11V8H-12z"/><path d="M-5-8H9L14-3V16H-5z"/></g>
<g transform="translate(563,958)" fill="#d8d8e4" stroke="#b4b4bc" stroke-width="1.6"><path d="M-10-14H6V8H-10z"/><rect x="-5" y="-17" width="6" height="5"/><path d="M-4-3H9L14 2V17H-4z"/></g>
<path d="M601 946Q616 938 620 952T608 970M598 954L601 946L610 948" fill="none" stroke="#e8e8f0" stroke-width="4"/><path d="M601 946Q616 938 620 952T608 970M598 954L601 946L610 948" fill="none" stroke="#b4b4bc" stroke-width="1.2"/>
<path d="M662 946Q646 938 642 952T654 970M664 954L662 946L652 948" fill="none" stroke="#e8e8f0" stroke-width="4"/><path d="M662 946Q646 938 642 952T654 970M664 954L662 946L652 948" fill="none" stroke="#b4b4bc" stroke-width="1.2"/>
<use href="#dd" x="625" y="975" stroke="none"/><use href="#dd" x="669" y="975" stroke="none"/>
<g transform="translate(695,958)"><path d="M-13-13L2 4H-4L0 15L-3 17L-8 6L-12 10z" fill="#f0e870"/><text x="-1" y="6" font-size="26" font-weight="bold" fill="#101060" stroke="none">?</text></g>
<g transform="translate(765,958)"><path d="M-17-11L-11-17L-7-11L-11-5z" fill="#1890d8"/><path d="M-4-16Q8-18 11-2" fill="none" stroke="#f0c020" stroke-width="2.6"/><path d="M6-4L15-4L11 3z" fill="#1818a0"/><path d="M-14 8H5L12 2H-6zM-14 8V17H5V8M5 17L12 11V2" fill="#eee" stroke-width="1.4"/></g>
<g transform="translate(836,958)"><path d="M-15-15L-8-15L14 10L10 14L-12-8z" fill="#40c8f0" stroke="#1818a0"/><path d="M-6 1L4-10L8-7L0 6z" fill="#40c8f0" stroke="#1818a0"/><path d="M2 14L8 5L13 8L8 17z" fill="#50d0f0" stroke="#1818a0"/></g>
<g transform="translate(879,958)"><rect x="-14" y="-15" width="28" height="30" fill="#f5f080" stroke="#18a0a8" stroke-width="2"/><path d="M0-12V12M-10 0H10" stroke-width="1.8"/><path d="M-4-8L0-13L4-8zM-4 8L0 13L4 8zM-7-3L-12 0L-7 3zM7-3L12 0L7 3z" fill="#000"/></g>
<g transform="translate(920,958)" fill="#101890" stroke="#101060"><path d="M0-18L7-9H3V-3H-3V-9H-7z"/><path d="M0 18L7 9H3V3H-3V9H-7z"/><path d="M-16 0L-8-6V-3H-3V3H-8V6z"/><path d="M16 0L8-6V-3H3V3H8V6z"/><circle r="3.6" fill="#fff"/></g>
<g transform="translate(963,958)"><rect x="-15" y="-15" width="24" height="14" rx="5" fill="#f4b8b8"/><circle cx="-5" cy="-9" r="6" fill="#e06060" stroke="#600"/><path d="M-12 2Q0-2 12 2" fill="none" stroke="#1818a0" stroke-width="2"/><path d="M-14 6L0-1L14 6L8 16H-8z" fill="#40c8e0"/></g>
<g transform="translate(1000,958)"><circle cx="-3" cy="-7" r="10" fill="#fff" stroke="#000" stroke-width="2"/><path d="M-8-7H2M-3-12V-2" stroke-width="2.4"/><path d="M4 1L14 16" stroke="#1c6a90" stroke-width="5"/></g>
<g transform="translate(1043,958)"><circle cx="-3" cy="-7" r="10" fill="#fff" stroke="#000" stroke-width="2"/><path d="M-8-7H2" stroke-width="2.4"/><path d="M4 1L14 16" stroke="#1c6a90" stroke-width="5"/></g>
<g transform="translate(1089,958)"><path d="M-14 16L-8 5H15L8 16z" fill="#40b0b8"/><path d="M0 7V-13" stroke="#804000" stroke-dasharray="2 2"/><path d="M-5-8L0-17L5-8" fill="none" stroke="#2020f0"/></g>
<g transform="translate(1130,958)"><rect x="-13" y="-15" width="26" height="30" fill="#18e0f0" stroke="#101090" stroke-width="2"/><path d="M0-15V15M-13 0H13" stroke="#101090" stroke-width="2"/><rect x="1" y="-14" width="11" height="13" fill="#d040c0" stroke="none" opacity=".7"/></g>
<g transform="translate(1172,960)"><rect x="-15" y="-9" width="22" height="26" fill="#40e8f8" stroke="#0808b0" stroke-width="2"/><path d="M-15-9L-7-18H15L7-9zM7-9L15-18V8L7 17z" fill="#40e8f8" stroke="#0808b0" stroke-width="2"/></g>
<use href="#dd" x="1191" y="975" stroke="none"/>
<g transform="translate(1217,958)"><rect x="-10" y="-17" width="20" height="36" rx="9" fill="#f0f020" stroke-width="2"/><rect x="-5" y="-9" width="10" height="24" fill="#10107a"/><ellipse cy="-12" rx="7" ry="3" fill="#40c8f0"/></g>
<rect x="1230" y="970" width="14" height="15" fill="#fff" stroke="none"/><use href="#dd" x="1237" y="975" stroke="none"/>
<g transform="translate(1263,958)"><rect x="-13" y="-17" width="27" height="33" fill="#d8d8e8" stroke="#101060" stroke-width="1.5"/><path d="M-5-12L4-15L8-6L2 0L-5-3z" fill="#f0f080"/><path d="M-5 4L4 0L9 4L2 9L-6 8z" fill="#40c0d0"/></g>
<g transform="translate(1305,958)"><rect x="-13" y="-17" width="27" height="33" fill="#40d8f0" stroke="#101060" stroke-width="1.5"/><path d="M-6 4L2-3L9 2L2 9z" fill="#f0f080"/><path d="M-6 4V9L2 13V9z" fill="#208080"/></g>
<text x="1389" y="966" font-size="30" font-style="italic" fill="#000" stroke="none" style="font-family:'Liberation Serif'">f</text><text x="1402" y="968" font-size="16" font-weight="bold" fill="#000" stroke="none">(x)</text>
<g transform="translate(1447,955)"><path d="M0-15C12-15 13-4 11 2C8 9 0 11-2 12L-9 19L-5 10C-12 5-12-15 0-15z" fill="#eee" stroke-width="1.6"/><path d="M-7-7H7M-8-2H8M-6 3H6" stroke="#555" stroke-dasharray="2 1"/></g>
<g transform="translate(1484,958)" fill="none" stroke="#a4a4ae" stroke-width="1.6"><circle cy="-8" r="4"/><rect x="-3" y="-4" width="6" height="8" fill="#e0e0e8"/><circle cy="9" r="4"/></g>
<g transform="translate(1522,958)"><rect x="-12" y="-17" width="25" height="8" fill="#0808d0"/><rect x="-12" y="-9" width="25" height="24" fill="#fff"/><path d="M-12-5H13M-12-1H13M-12 3H13M-12 7H13M-12 11H13M-8-9V15M-4-9V15M0-9V15M4-9V15M8-9V15" stroke="#000"/></g>
<use href="#dd" x="1539" y="975" stroke="none"/>
<g transform="translate(1566,958)"><rect x="8" y="-15" width="6" height="8" fill="#40c8f0" stroke="#1818f0"/><rect x="8" y="-1" width="6" height="8" fill="#40c8f0" stroke="#1818f0"/><rect x="8" y="11" width="6" height="8" fill="#40c8f0" stroke="#1818f0"/><rect x="-15" y="-6" width="7" height="15" fill="#f0e030" stroke="#101090"/><path d="M-8 0H8M-4 0L6-11M-4 0L6 14"/><path d="M0-8L4-4M0 10L4 6" stroke="#e01010" stroke-width="2"/></g>
<g transform="translate(1609,958)"><path d="M-7-6V-10A7 7 0 0 1 7-10V-6" fill="none" stroke="#888" stroke-width="2.4"/><rect x="-12" y="-6" width="24" height="24" rx="4" fill="#555"/><path d="M-8 8H8" stroke="#888" stroke-width="2"/><circle cy="3" r="3" fill="#000"/><rect x="-1" y="4" width="2" height="8" fill="#000"/></g>
<use href="#dd" x="1627" y="975" stroke="none"/>
<g transform="translate(1652,958)"><rect x="-11" y="-17" width="11" height="13" fill="#10a070"/><rect x="-11" y="-3" width="11" height="12" fill="#f0f020"/><rect x="-8" y="-15" width="5" height="9" fill="#101060"/><rect x="-11" y="3" width="11" height="13" fill="#10a070"/><rect x="-8" y="5" width="5" height="8" fill="#f0f020"/><path d="M4-17Q8-15 7-8T12 0Q7 2 7 9T4 17" fill="none" stroke-width="1.6"/><path d="M15-4H20M15 2H20" stroke="#333" stroke-width="1.4"/></g>
<g transform="translate(1722,958)"><path d="M-11-10H11M-11-10L-6-13M-11-10L-6-7M11-10L6-13M11-10L6-7" fill="none" stroke="#1818c0" stroke-width="1.6"/><rect x="-14" y="2" width="28" height="14" fill="#f0c8a8" stroke="#1818c0" stroke-width="1.6"/><path d="M-10 2V8M-6 2V6M-2 2V8M2 2V6M6 2V8M10 2V6" stroke="#806040"/></g>
<g transform="translate(1765,958)"><path d="M-4-17H10V17H2V9H-12V-3H-4z" fill="#333"/><circle cx="-6" cy="3" r="7" fill="#40a0d0"/><path d="M-8-1L-2 6" stroke="#f0e040" stroke-width="2"/></g>
<g transform="translate(1807,958)"><circle cy="-14" r="4" fill="none" stroke-width="2"/><rect x="-8" y="-10" width="16" height="26" rx="5" fill="#b09830"/><rect x="-2" y="-6" width="5" height="18" fill="#e8d070" stroke="none"/></g>
</g>

<!-- logo -->
<path d="M1863 932C1872 928 1877 932 1875 937C1873 940 1870 941 1868 942C1873 943 1874 946 1871 950" fill="none" stroke="#d03030" stroke-width="1.6"/>
<text x="1850" y="965" font-size="25" font-style="italic" fill="#5a58a8" style="font-family:'Liberation Serif'">D</text>
<text x="1871" y="964" font-size="26" font-style="italic" fill="#8a6ab8" style="font-family:'Liberation Serif'">S</text>
<text x="1860" y="977" font-size="13.5" font-style="italic" font-weight="bold" fill="#3c3a98" textLength="48" lengthAdjust="spacingAndGlyphs">CATIA</text>

<!-- status -->
<text x="5" y="1008" font-size="17" fill="#1c1c26" textLength="323" lengthAdjust="spacingAndGlyphs">Cylinder_Manifold_Assembly preselected</text>
<rect x="1369" y="989" width="448" height="27" fill="#fff"/>
<path d="M1369 1016V989H1817" fill="none" stroke="#7a7a82" stroke-width="2"/>
<path d="M1369 1018H1819V989" fill="none" stroke="#f2f2f8" stroke-width="1.5"/>
<rect x="1818" y="986" width="49" height="34" fill="#d8d8e4" stroke="#f4f4fa"/>
<rect x="1870" y="986" width="49" height="34" fill="#d8d8e4" stroke="#f4f4fa"/>
<g fill="none" stroke="#a4a4ae" stroke-width="1.4"><rect x="1835" y="996" width="9" height="11"/><path d="M1831 1012H1852V998"/></g>
<g transform="translate(1893,1003)"><circle r="10" fill="#d8f0ff" stroke="#000" stroke-width="2"/><circle r="5" fill="#1848c0"/><rect x="-1.5" y="-3" width="3" height="7" fill="#fff"/><path d="M-11 11H11" stroke="#000" stroke-width="2"/></g>
</svg>
</body></html>
